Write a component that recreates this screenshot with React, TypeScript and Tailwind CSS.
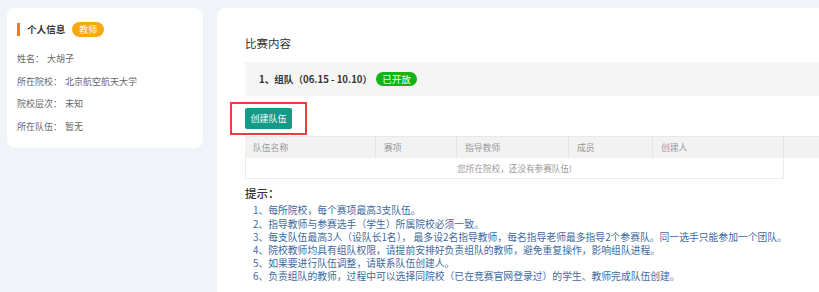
import React from "react";

const font = { fontFamily: '"Noto Sans CJK SC", "Noto Sans", sans-serif' };

export default function App() {
  const rows = [
    ["姓名：", "大胡子"],
    ["所在院校：", "北京航空航天大学"],
    ["院校层次：", "未知"],
    ["所在队伍：", "暂无"],
  ];
  const tips = [
    "1、每所院校，每个赛项最高3支队伍。",
    "2、指导教师与参赛选手（学生）所属院校必须一致。",
    "3、每支队伍最高3人（设队长1名）， 最多设2名指导教师，每名指导老师最多指导2个参赛队。同一选手只能参加一个团队。",
    "4、院校教师均具有组队权限，请提前安排好负责组队的教师，避免重复操作，影响组队进程。",
    "5、如果要进行队伍调整，请联系队伍创建人。",
    "6、负责组队的教师，过程中可以选择同院校（已在竞赛官网登录过）的学生、教师完成队伍创建。",
  ];
  const cols: [string, string][] = [
    ["队伍名称", "w-[131px]"],
    ["赛项", "w-[81px]"],
    ["指导教师", "w-[112px]"],
    ["成员", "w-[84px]"],
    ["创建人", "w-[131px]"],
  ];
  return (
    <div
      style={font}
      className="w-[819px] h-[292px] overflow-hidden bg-[#f0f3f8] flex items-start pt-[8px] pl-[7px] gap-[14px]"
    >
      <div className="w-[196px] h-[140px] shrink-0 bg-white rounded-[8px] px-[10px] pt-[14px]">
        <div className="flex items-center h-[15px]">
          <div className="w-[3px] h-[13px] bg-[#f47a20]" />
          <span className="ml-[7px] text-[9.6px] font-bold text-[#333]">个人信息</span>
          <span className="ml-[7px] w-[32px] h-[15px] rounded-full bg-[#f7a812] text-white text-[9px] flex items-center justify-center">
            教师
          </span>
        </div>
        <div className="mt-[11px]">
          {rows.map(([k, v]) => (
            <div key={k} className="h-[22.4px] flex items-center text-[9px] text-[#666]">
              <span>{k}</span>
              <span className="ml-[3px]">{v}</span>
            </div>
          ))}
        </div>
      </div>

      <div className="w-[700px] h-[300px] shrink-0 bg-white rounded-[8px] pl-[28px] pt-[25px]">
        <div className="h-[20px] leading-[20px] text-[11.5px] text-[#333]">比赛内容</div>
        <div className="mt-[9px] h-[34px] bg-[#f5f5f5] pl-[14px] flex items-center">
          <span className="text-[9.6px] font-bold text-[#333]">1、组队（06.15 - 10.10）</span>
          <span className="ml-[4px] w-[41px] h-[14px] rounded-full bg-[#13b313] text-white text-[9.6px] flex items-center justify-center">
            已开放
          </span>
        </div>
        <div className="mt-[6px] -ml-[15px] w-[77px] h-[33px] border-2 border-[#f23b3b] flex items-center justify-center">
          <div className="w-[47px] h-[21px] bg-[#149a86] rounded-[2px] text-white text-[9px] flex items-center justify-center">
            创建队伍
          </div>
        </div>
        <div className="mt-[1px]">
          <div className="flex h-[22px] bg-[#f2f2f2] border-t border-[#e8e8e8]">
            {cols.map(([t, w]) => (
              <div
                key={t}
                className={`${w} h-full border-r border-[#e4e4e4] pl-[8px] flex items-center text-[8.8px] text-[#999]`}
              >
                {t}
              </div>
            ))}
            <div className="flex-1" />
          </div>
          <div className="w-[539px] h-[21px] border border-t-0 border-[#ebebeb] flex items-center justify-center text-[8.6px] text-[#999]">
            您所在院校，还没有参赛队伍!
          </div>
        </div>
        <div className="mt-[6px] h-[16px] leading-[16px] text-[11.5px] font-medium text-[#333]">提示：</div>
        <div className="mt-[3.4px] pl-[8px] text-[9.8px] leading-[13.2px] text-[#3d6a9e]">
          {tips.map((t) => (
            <div key={t} className="whitespace-nowrap">{t}</div>
          ))}
        </div>
      </div>
    </div>
  );
}
